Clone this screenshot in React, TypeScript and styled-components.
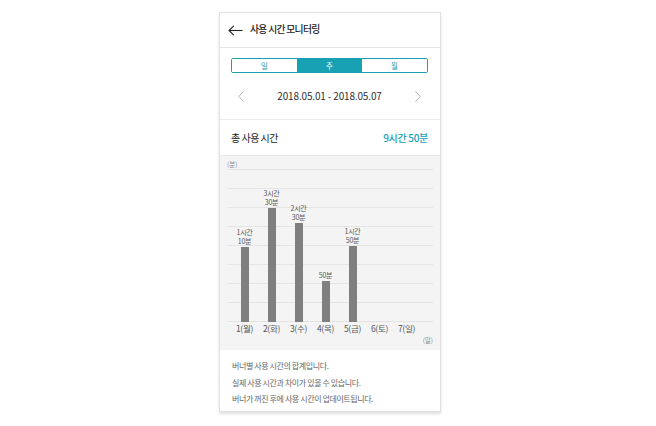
import React from "react";
import styled, { createGlobalStyle } from "styled-components";

const TEAL = "#17a1b3";

const Global = createGlobalStyle`
  html, body { margin: 0; padding: 0; background: #ffffff; }
  body { font-family: "Noto Sans CJK KR", "Noto Sans", sans-serif; }
  * { box-sizing: border-box; }
`;

const Page = styled.div`
  width: 656px;
  height: 426px;
  padding: 12px 0 0 219px;
`;

const Card = styled.div`
  width: 222px;
  border: 1px solid #e2e2e2;
  background: #fff;
  box-shadow: 0 2px 3px rgba(0, 0, 0, 0.13);
  display: flex;
  flex-direction: column;
`;

const Header = styled.div`
  height: 35px;
  border-bottom: 1px solid #e4e4e4;
  display: flex;
  align-items: center;
  padding-left: 8px;
  gap: 7px;
`;

const Title = styled.div`
  font-size: 9.8px;
  font-weight: 500;
  letter-spacing: -0.7px;
  color: #222;
  line-height: 1;
`;

const Controls = styled.div`
  height: 72px;
  border-bottom: 1px solid #ececec;
  padding-top: 10px;
  display: flex;
  flex-direction: column;
`;

const Tabs = styled.div`
  margin-left: 11px;
  width: 197px;
  height: 15px;
  border: 1px solid ${TEAL};
  border-radius: 2px;
  display: flex;
  overflow: hidden;
`;

const Tab = styled.div<{ $active?: boolean }>`
  flex: 1;
  display: flex;
  align-items: center;
  justify-content: center;
  font-size: 7.5px;
  line-height: 1;
  color: ${(p) => (p.$active ? "#fff" : TEAL)};
  background: ${(p) => (p.$active ? TEAL : "#fff")};
`;

const DateRow = styled.div`
  flex: 1;
  display: flex;
  align-items: center;
  justify-content: space-between;
  padding: 0 19px 0 18px;
`;

const DateText = styled.div`
  font-size: 10px;
  letter-spacing: -0.15px;
  color: #333;
  line-height: 1;
`;

const TotalRow = styled.div`
  height: 35px;
  display: flex;
  align-items: center;
  justify-content: space-between;
  padding: 0 12px 0 11px;
`;

const TotalLabel = styled.div`
  font-size: 10px;
  letter-spacing: -0.5px;
  color: #222;
`;

const TotalValue = styled.div`
  font-size: 10px;
  font-weight: 500;
  letter-spacing: -0.3px;
  color: ${TEAL};
`;

const ChartSection = styled.div`
  height: 195px;
  border-top: 1px solid #e9e9e9;
  background: #f4f4f4;
  padding: 0 7px 0 7px;
  display: flex;
  flex-direction: column;
`;

const UnitTop = styled.div`
  height: 13px;
  padding-top: 4px;
  font-size: 6.5px;
  line-height: 9px;
  color: #888;
`;

const Plot = styled.div`
  height: 153px;
  margin-left: 1px;
  background: repeating-linear-gradient(
    to bottom,
    #e4e4e4 0px,
    #e4e4e4 1px,
    transparent 1px,
    transparent 19px
  );
  display: flex;
  align-items: flex-end;
  padding-left: 3px;
`;

const Column = styled.div`
  width: 27px;
  display: flex;
  flex-direction: column;
  align-items: center;
  justify-content: flex-end;
`;

const BarLabel = styled.div`
  font-size: 7px;
  letter-spacing: -0.3px;
  line-height: 9px;
  color: #555;
  text-align: center;
  margin-bottom: 1px;
`;

const Bar = styled.div`
  width: 8px;
  background: #7f7f7f;
`;

const DayRow = styled.div`
  height: 13px;
  display: flex;
  padding-left: 4px;
`;

const DayLabel = styled.div`
  width: 27px;
  text-align: center;
  font-size: 8.5px;
  letter-spacing: -0.3px;
  line-height: 13px;
  color: #555;
`;

const UnitBottom = styled.div`
  height: 10px;
  line-height: 10px;
  font-size: 6.5px;
  color: #888;
  text-align: right;
`;

const Notes = styled.div`
  height: 61px;
  padding: 8px 0 0 12px;
  display: flex;
  flex-direction: column;
`;

const Note = styled.div`
  font-size: 8px;
  letter-spacing: -0.4px;
  line-height: 16.5px;
  color: #666;
`;

const BackArrow = () => (
  <svg width="15" height="11" viewBox="0 0 15 11" fill="none">
    <path d="M1 5.5H14.5" stroke="#222" strokeWidth="1.1" />
    <path d="M5.8 0.8L1 5.5L5.8 10.2" stroke="#222" strokeWidth="1.1" />
  </svg>
);

const Chevron = ({ dir }: { dir: "left" | "right" }) => (
  <svg width="6" height="11" viewBox="0 0 6 11" fill="none">
    <path
      d={dir === "left" ? "M5.5 0.5L0.8 5.5L5.5 10.5" : "M0.5 0.5L5.2 5.5L0.5 10.5"}
      stroke="#a8a8a8"
      strokeWidth="0.9"
    />
  </svg>
);

const data: { day: string; label?: string[]; h: number }[] = [
  { day: "1(월)", label: ["1시간", "10분"], h: 75 },
  { day: "2(화)", label: ["3시간", "30분"], h: 114 },
  { day: "3(수)", label: ["2시간", "30분"], h: 99 },
  { day: "4(목)", label: ["50분"], h: 41 },
  { day: "5(금)", label: ["1시간", "50분"], h: 76 },
  { day: "6(토)", h: 0 },
  { day: "7(일)", h: 0 },
];

export default function App() {
  return (
    <>
      <Global />
      <Page>
        <Card>
          <Header>
            <BackArrow />
            <Title>사용 시간 모니터링</Title>
          </Header>
          <Controls>
            <Tabs>
              <Tab>일</Tab>
              <Tab $active>주</Tab>
              <Tab>월</Tab>
            </Tabs>
            <DateRow>
              <Chevron dir="left" />
              <DateText>2018.05.01 - 2018.05.07</DateText>
              <Chevron dir="right" />
            </DateRow>
          </Controls>
          <TotalRow>
            <TotalLabel>총 사용 시간</TotalLabel>
            <TotalValue>9시간 50분</TotalValue>
          </TotalRow>
          <ChartSection>
            <UnitTop>(분)</UnitTop>
            <Plot>
              {data.map((d) => (
                <Column key={d.day}>
                  {d.label && (
                    <BarLabel>
                      {d.label.map((l) => (
                        <div key={l}>{l}</div>
                      ))}
                    </BarLabel>
                  )}
                  {d.h > 0 && <Bar style={{ height: d.h }} />}
                </Column>
              ))}
            </Plot>
            <DayRow>
              {data.map((d) => (
                <DayLabel key={d.day}>{d.day}</DayLabel>
              ))}
            </DayRow>
            <UnitBottom>(일)</UnitBottom>
          </ChartSection>
          <Notes>
            <Note>버너별 사용 시간의 합계입니다.</Note>
            <Note>실제 사용 시간과 차이가 있을 수 있습니다.</Note>
            <Note>버너가 꺼진 후에 사용 시간이 업데이트됩니다.</Note>
          </Notes>
        </Card>
      </Page>
    </>
  );
}
